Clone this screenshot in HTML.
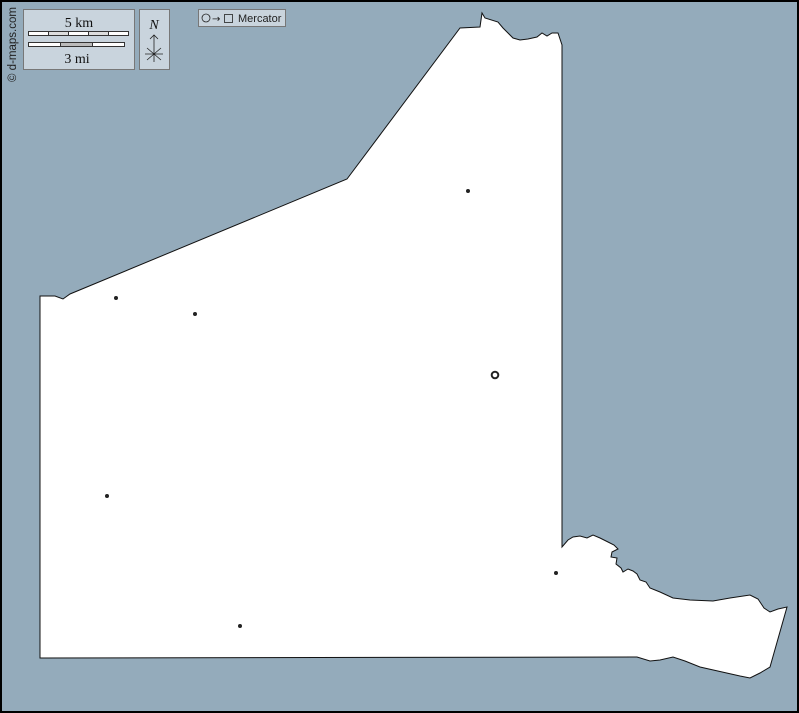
<!DOCTYPE html>
<html><head><meta charset="utf-8"><style>
body{margin:0;width:799px;height:713px;overflow:hidden;background:#000}
svg{display:block}
</style></head><body>
<svg width="799" height="713" viewBox="0 0 799 713" xmlns="http://www.w3.org/2000/svg">
<rect x="0" y="0" width="799" height="713" fill="#000"/>
<rect x="2" y="2" width="795" height="709" fill="#94abbb"/>
<path d="M40,296 L55,296 L63,299 L70,294 L347,179 L460,28 L480,27 L482,13 L485,18 L498,22 L503,28 L507,32 L513,38 L520,40 L528,39 L537,37 L542,33 L547,36 L552,33 L558,33 L562,45 L562,547 L568,540 L573,537 L580,536 L587,538 L593,535 L600,538 L608,542 L614,545 L618,549 L612,552 L611,557 L617,558 L616,564 L621,568 L623,572 L628,569 L633,571 L637,574 L640,580 L646,582 L650,588 L660,592 L673,598 L690,600 L713,601 L730,598 L750,595 L758,599 L764,608 L770,612 L778,609 L787,607 L770,667 L760,673 L750,678 L740,676 L700,667 L685,661 L673,657 L660,660 L650,661 L637,657 L40,658 Z" fill="#fff" stroke="#111" stroke-width="1"/>
<g fill="#222">
<circle cx="468" cy="191" r="2"/>
<circle cx="116" cy="298" r="2"/>
<circle cx="195" cy="314" r="2"/>
<circle cx="107" cy="496" r="2"/>
<circle cx="556" cy="573" r="2"/>
<circle cx="240" cy="626" r="2"/>
</g>
<circle cx="495" cy="375" r="3.3" fill="none" stroke="#222" stroke-width="2"/>
<rect x="23.5" y="9.5" width="111" height="60" fill="#c9d4dd" stroke="#777"/>
<text x="79" y="27" font-family="Liberation Serif,serif" font-size="14" text-anchor="middle" fill="#111">5 km</text>
<rect x="28.5" y="31.5" width="100" height="4" fill="#fff" stroke="#333"/>
<rect x="48.5" y="31.5" width="20" height="4" fill="#ddd" stroke="#333"/>
<rect x="88.5" y="31.5" width="20" height="4" fill="#ddd" stroke="#333"/>
<rect x="28.5" y="42.5" width="96" height="4" fill="#fff" stroke="#333"/>
<rect x="60.5" y="42.5" width="32" height="4" fill="#bbb" stroke="#333"/>
<text x="77" y="63" font-family="Liberation Serif,serif" font-size="14" text-anchor="middle" fill="#111">3 mi</text>
<rect x="139.5" y="9.5" width="30" height="60" fill="#c9d4dd" stroke="#777"/>
<text x="154" y="29" font-family="Liberation Serif,serif" font-style="italic" font-size="14" text-anchor="middle" fill="#111">N</text>
<path d="M154,35 L154,62 M150,39 L154,35 L158,39 M147,48 L161,60 M161,48 L147,60 M145,54 L163,54" stroke="#222" stroke-width="0.8" fill="none"/>
<rect x="198.5" y="9.5" width="87" height="17" fill="#c9d4dd" stroke="#777"/>
<circle cx="206" cy="18" r="4" fill="none" stroke="#222" stroke-width="0.8"/>
<text x="212" y="22" font-family="DejaVu Sans,sans-serif" font-size="10" fill="#222">→</text>
<rect x="224.5" y="14.5" width="8" height="8" fill="none" stroke="#222" stroke-width="0.8"/>
<text x="238" y="22" font-family="Liberation Sans,sans-serif" font-size="11" fill="#222">Mercator</text>
<text transform="translate(16,82) rotate(-90)" font-family="Liberation Sans,sans-serif" font-size="11.5" fill="#222">© d-maps.com</text>
</svg>
</body></html>
